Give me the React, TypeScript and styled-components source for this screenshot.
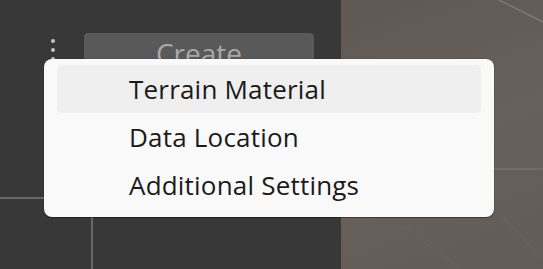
import React from "react";
import styled, { createGlobalStyle } from "styled-components";

const Global = createGlobalStyle`
  html, body { margin: 0; padding: 0; background: #383838; }
  #root { width: 543px; height: 269px; overflow: hidden; }
`;

const Screen = styled.div`
  position: relative;
  width: 543px;
  height: 269px;
  display: grid;
  grid-template-columns: 341px 1fr;
  font-family: "Open Sans", "Noto Sans", sans-serif;
`;

const SidePanel = styled.div`
  position: relative;
  background: #383838;
  overflow: hidden;
`;

const Toolbar = styled.div`
  display: flex;
  align-items: flex-start;
  gap: 29px;
  padding: 33px 0 0 51px;
`;

const Kebab = styled.div`
  display: flex;
  flex-direction: column;
  gap: 5px;
  padding-top: 6px;
`;

const Dot = styled.span`
  width: 4px;
  height: 4px;
  border-radius: 50%;
  background: #c4c4c4;
`;

const CreateButton = styled.button`
  width: 230px;
  height: 36px;
  border: none;
  border-radius: 4px;
  background: #595959;
  color: #a9a9a9;
  font-family: inherit;
  font-size: 28px;
  line-height: 36px;
  padding: 2px 0 0;
  text-align: center;
`;

const GridLineH = styled.div<{ $top: number; $left: number; $width: number }>`
  position: absolute;
  top: ${(p) => p.$top}px;
  left: ${(p) => p.$left}px;
  width: ${(p) => p.$width}px;
  height: 2px;
  background: #686868;
`;

const GridLineV = styled.div<{ $top: number; $left: number }>`
  position: absolute;
  top: ${(p) => p.$top}px;
  left: ${(p) => p.$left}px;
  bottom: 0;
  width: 2px;
  background: #686868;
`;

const Viewport = styled.div`
  position: relative;
  background: linear-gradient(160deg, #605853 0%, #67605b 50%, #625b56 100%);
  overflow: hidden;
`;

const ViewportArt = styled.svg`
  position: absolute;
  inset: 0;
  width: 100%;
  height: 100%;
`;

const Menu = styled.div`
  position: absolute;
  left: 44px;
  top: 59px;
  width: 450px;
  box-sizing: border-box;
  padding: 6px 13px 8px;
  display: flex;
  flex-direction: column;
  background: #f9f9f9;
  border-radius: 8px;
  box-shadow: 0 1px 1px rgba(0, 0, 0, 0.35), 0 0 0 1px rgba(0, 0, 0, 0.06);
`;

const MenuItem = styled.div<{ $active?: boolean }>`
  height: 48px;
  display: flex;
  align-items: center;
  padding-left: 72px;
  border-radius: 5px;
  background: ${(p) => (p.$active ? "#efefef" : "transparent")};
  color: #1b1b1b;
  font-size: 26px;
  letter-spacing: 0.2px;
`;

export default function App() {
  return (
    <>
      <Global />
      <Screen>
        <SidePanel>
          <Toolbar>
            <Kebab>
              <Dot />
              <Dot />
              <Dot />
            </Kebab>
            <CreateButton>Create</CreateButton>
          </Toolbar>
          <GridLineH $top={197} $left={0} $width={60} />
          <GridLineV $top={200} $left={91} />
        </SidePanel>
        <Viewport>
          <ViewportArt viewBox="0 0 202 269" preserveAspectRatio="none">
            <line x1="158" y1="0" x2="202" y2="22" stroke="#807a75" strokeWidth="1.5" />
            <line x1="140" y1="169" x2="202" y2="169" stroke="#77716c" strokeWidth="1.5" />
            <line x1="160" y1="215" x2="202" y2="260" stroke="#6c6661" strokeWidth="1" />
            <line x1="60" y1="225" x2="120" y2="269" stroke="#6a645f" strokeWidth="1" />
          </ViewportArt>
        </Viewport>
        <Menu>
          <MenuItem $active>Terrain Material</MenuItem>
          <MenuItem>Data Location</MenuItem>
          <MenuItem>Additional Settings</MenuItem>
        </Menu>
      </Screen>
    </>
  );
}
